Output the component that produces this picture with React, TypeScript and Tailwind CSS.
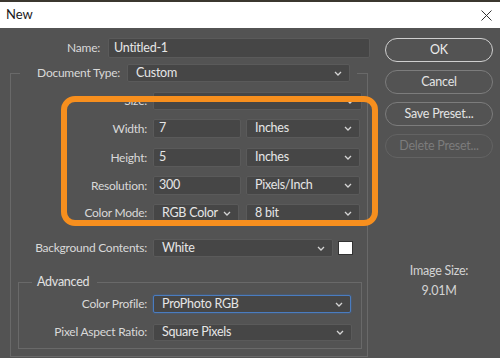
import React from "react"

function Chevron() {
  return (
    <svg width="8" height="5" viewBox="0 0 8 5" className="shrink-0">
      <polyline points="1,1 4,4 7,1" fill="none" stroke="#d4d4d4" strokeWidth="1.3" />
    </svg>
  )
}

function Field(props: {
  w: string
  h?: string
  value: string
  select?: boolean
  focus?: boolean
}) {
  const { w, h = "h-[19px]", value, select, focus } = props
  return (
    <div
      className={[
        w,
        h,
        "flex shrink-0 items-center justify-between rounded-[2px] border bg-[#464646] text-[12.5px] text-[#e6e6e6]",
        select ? "pl-[8px] pr-[7px]" : "pl-[5px]",
        focus ? "border-[#4a7cc0] shadow-[0_0_2px_#3b6aa8]" : "border-[#5a5a5a]"
      ].join(" ")}>
      <span className="whitespace-nowrap">{value}</span>
      {select ? <Chevron /> : null}
    </div>
  )
}

function Row(props: { label: string; labelW: string; gap?: string; className?: string; children: React.ReactNode }) {
  return (
    <div className={"flex items-center " + (props.className ?? "")}>
      <div className={props.labelW + " shrink-0 whitespace-nowrap pr-[6px] text-right"}>{props.label}</div>
      <div className={"flex items-center " + (props.gap ?? "")}>{props.children}</div>
    </div>
  )
}

function Button(props: { label: string; primary?: boolean; disabled?: boolean; className?: string }) {
  const { label, primary, disabled } = props
  return (
    <div
      className={[
        "flex h-[24px] w-[108px] items-center justify-center rounded-full text-[12.5px]",
        primary
          ? "border-[1.5px] border-[#cfcfcf] text-[#ececec]"
          : disabled
            ? "border border-[#636363] text-[#7c7c7c]"
            : "border border-[#7c7c7c] text-[#e4e4e4]",
        props.className ?? ""
      ].join(" ")}>
      {label}
    </div>
  )
}

export default function App() {
  return (
    <div className="relative flex h-[358px] w-[500px] flex-col overflow-hidden bg-[#535353] font-['Lato',sans-serif] text-[12px] tracking-[-0.25px] text-[#d9d9d9]">
      <div className="h-[2px] bg-[#3b372f]" />
      <div className="flex h-[26px] items-center justify-between bg-white pl-[6px] pr-[8px] text-[13px] tracking-normal text-[#1a1a1a]">
        <span>New</span>
        <svg width="11" height="11" viewBox="0 0 11 11">
          <path d="M0.5 0.5 L10.5 10.5 M10.5 0.5 L0.5 10.5" stroke="#333" strokeWidth="1" />
        </svg>
      </div>

      <div className="flex flex-1">
        <div className="flex w-[378px] shrink-0 flex-col pt-[10px]">
          <div className="flex h-[20px] items-center">
            <div className="w-[100px] shrink-0 text-right">Name:</div>
            <div className="ml-[8px]">
              <Field w="w-[262px]" h="h-[20px]" value="Untitled-1" />
            </div>
          </div>

          <fieldset className="ml-[10px] mt-[6px] w-[358px] border border-[#696969] pb-[7px]">
            <legend className="ml-[9px] flex h-[18px] items-center pr-[7px]">
              <div className="w-[107px] shrink-0 whitespace-nowrap pr-[7px] text-right">Document Type:</div>
              <Field w="w-[223px]" h="h-[18px]" value="Custom" select />
            </legend>

            <Row label="Size:" labelW="w-[142px]" className="mt-[10px]">
              <Field w="w-[209px]" h="h-[18px]" value="" select />
            </Row>
            <Row label="Width:" labelW="w-[142px]" gap="gap-[5px]" className="mt-[9px]">
              <Field w="w-[88px]" value="7" />
              <Field w="w-[114px]" value="Inches" select />
            </Row>
            <Row label="Height:" labelW="w-[142px]" gap="gap-[5px]" className="mt-[10px]">
              <Field w="w-[88px]" value="5" />
              <Field w="w-[114px]" value="Inches" select />
            </Row>
            <Row label="Resolution:" labelW="w-[142px]" gap="gap-[5px]" className="mt-[9px]">
              <Field w="w-[88px]" value="300" />
              <Field w="w-[114px]" value="Pixels/Inch" select />
            </Row>
            <Row label="Color Mode:" labelW="w-[142px]" gap="gap-[7px]" className="mt-[9px]">
              <Field w="w-[86px]" h="h-[18px]" value="RGB Color" select />
              <Field w="w-[114px]" h="h-[18px]" value="8 bit" select />
            </Row>
            <Row label="Background Contents:" labelW="w-[142px]" gap="gap-[5px]" className="mt-[17px]">
              <Field w="w-[180px]" h="h-[18px]" value="White" select />
              <div className="h-[14px] w-[15px] border border-[#333] bg-white" />
            </Row>

            <fieldset className="ml-[7px] mt-[17px] w-[344px] border border-[#696969] pb-[7px]">
              <legend className="ml-[13px] pl-[5px] pr-[8px] text-[12.5px] leading-[16px] text-[#e2e2e2]">
                Advanced
              </legend>
              <Row label="Color Profile:" labelW="w-[134px]" className="mt-[5px]">
                <Field w="w-[198px]" h="h-[18px]" value="ProPhoto RGB" select focus />
              </Row>
              <Row label="Pixel Aspect Ratio:" labelW="w-[134px]" className="mt-[10px]">
                <Field w="w-[199px]" h="h-[17px]" value="Square Pixels" select />
              </Row>
            </fieldset>
          </fieldset>
        </div>

        <div className="flex flex-1 flex-col items-start pl-[7px] pt-[10px]">
          <Button label="OK" primary />
          <Button label="Cancel" className="mt-[8px]" />
          <Button label="Save Preset..." className="mt-[8px]" />
          <Button label="Delete Preset..." disabled className="mt-[8px]" />
          <div className="mt-[105px] flex w-[108px] flex-col items-center text-[12.5px] leading-[16px] text-[#d4d4d4]">
            <span>Image Size:</span>
            <span className="mt-[4px]">9.01M</span>
          </div>
        </div>
      </div>

      <div className="pointer-events-none absolute left-[61px] top-[96px] h-[130px] w-[317px] rounded-[14px] border-[6px] border-[#f78f1e]" />
    </div>
  )
}
